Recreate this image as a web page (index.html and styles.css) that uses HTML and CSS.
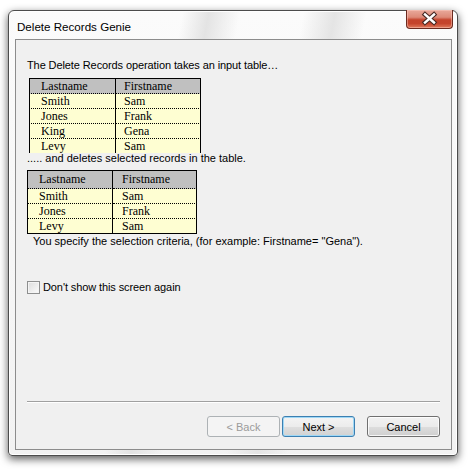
FILE: index.html
```html
<!DOCTYPE html>
<html>
<head>
<meta charset="utf-8">
<link rel="stylesheet" href="styles.css">
</head>
<body>
<div class="window">
  <div class="titlebar">
    <span class="title">Delete Records Genie</span>
    <div class="close">
      <svg width="47" height="19" viewBox="0 0 47 19">
        <path d="M19 5.5 L28 13.5 M28 5.5 L19 13.5" stroke="#4a2a24" stroke-width="4.6" stroke-linecap="square" fill="none"/>
        <path d="M19 5.5 L28 13.5 M28 5.5 L19 13.5" stroke="#ffffff" stroke-width="2.4" stroke-linecap="square" fill="none"/>
      </svg>
    </div>
  </div>
  <div class="client">
    <p class="line first">The Delete Records operation takes an input table…</p>
    <div class="clip">
      <table class="grid grid-a">
        <tr class="head"><td>Lastname</td><td>Firstname</td></tr>
        <tr><td>Smith</td><td>Sam</td></tr>
        <tr><td>Jones</td><td>Frank</td></tr>
        <tr><td>King</td><td>Gena</td></tr>
        <tr><td>Levy</td><td>Sam</td></tr>
      </table>
    </div>
    <p class="line second">..... and deletes selected records in the table.</p>
    <table class="grid grid-b">
      <tr class="head"><td>Lastname</td><td>Firstname</td></tr>
      <tr><td>Smith</td><td>Sam</td></tr>
      <tr><td>Jones</td><td>Frank</td></tr>
      <tr class="last"><td>Levy</td><td>Sam</td></tr>
    </table>
    <p class="line third">You specify the selection criteria, (for example: Firstname= "Gena").</p>
    <label class="check"><span class="box"></span><span>Don't show this screen again</span></label>
    <div class="sep"></div>
    <div class="buttons">
      <button class="btn disabled">&lt; Back</button>
      <button class="btn default">Next &gt;</button>
      <button class="btn cancel">Cancel</button>
    </div>
  </div>
</div>
</body>
</html>
```

FILE: styles.css
```css
html, body {
  margin: 0;
  padding: 0;
  background: #ffffff;
}
body {
  width: 472px;
  height: 469px;
  overflow: hidden;
  font-family: "Liberation Sans", Arial, sans-serif;
  font-size: 11px;
  color: #000;
}
.window {
  box-sizing: border-box;
  margin: 10px 0 0 8px;
  width: 450px;
  height: 446px;
  border: 1px solid #4c4c4c;
  border-radius: 6px 6px 4px 4px;
  background:
    linear-gradient(100deg, rgba(255,255,255,0) 0%, rgba(255,255,255,0) 33%, rgba(225,225,225,0.9) 38%, rgba(255,255,255,0) 44%, rgba(255,255,255,0) 56%, rgba(226,226,226,0.9) 62%, rgba(255,255,255,0) 68%),
    linear-gradient(#fbfbfb, #f2f2f2);
  box-shadow: 0 3px 9px rgba(0,0,0,0.65), inset 0 0 0 1px #ffffff;
  display: flex;
  flex-direction: column;
}
.titlebar {
  height: 28px;
  display: flex;
  align-items: flex-start;
  justify-content: space-between;
  flex: none;
}
.title {
  font-family: "Liberation Sans", Arial, sans-serif;
  font-size: 11.6px;
  margin: 9px 0 0 8px;
  line-height: 14px;
}
.close {
  margin: -1px 4px 0 0;
  width: 47px;
  height: 19px;
  box-sizing: border-box;
  border: 1px solid #6b2a1f;
  border-top: none;
  border-radius: 0 0 4px 4px;
  background: linear-gradient(#e9a99b 0%, #dd8a78 40%, #c4432c 55%, #c5442c 75%, #e07a5c 100%);
  box-shadow: inset 0 0 0 1px rgba(255,210,200,0.45);
  overflow: hidden;
}
.close svg { display: block; margin: -1px 0 0 -1px; }
.client {
  flex: 1;
  margin: 0 5px 5px 6px;
  border: 1px solid #8c8c8c;
  background: #f0f0f0;
  padding: 0 11px 12px 11px;
  display: flex;
  flex-direction: column;
  align-items: flex-start;
}
.line {
  margin: 0;
  line-height: 14px;
  white-space: nowrap;
}
.first { margin-top: 18px; letter-spacing: -0.1px; }
.clip {
  margin-top: 6px;
  margin-left: 2px;
  height: 75px;
  overflow: hidden;
}
.second { margin-top: -2px; }
.third { margin-left: 6px; }
.grid {
  border-collapse: separate;
  border-spacing: 0;
  font-family: "Liberation Serif", "Times New Roman", serif;
  font-size: 12px;
}
.grid td {
  padding: 0 0 0 11px;
  height: 14px;
  line-height: 14px;
  border-bottom: 1px dotted #000;
  background: #fefed2;
  white-space: nowrap;
  vertical-align: top;
}
.grid td:first-child {
  border-left: 1px solid #000;
  border-right: 1px solid #000;
}
.grid td:last-child {
  border-right: 1px solid #000;
  padding-left: 8px;
}
.grid .head td {
  background: #c0c0c0;
  border-top: 1px solid #000;
}
.grid-a td:first-child { width: 74px; }
.grid-a td:last-child { width: 76px; }
.grid-b { margin-top: 5px; }
.grid-b td:first-child { width: 73px; }
.grid-b td:last-child { width: 74px; padding-left: 9px; }
.grid-b .head td { height: 16px; line-height: 17px; }
.grid-b .last td { border-bottom: 1px solid #000; }
.check {
  margin-top: 33px;
  display: flex;
  align-items: center;
  height: 13px;
  line-height: 13px;
  white-space: nowrap;
  letter-spacing: -0.1px;
}
.box {
  box-sizing: border-box;
  width: 13px;
  height: 13px;
  border: 1px solid #8e8f8f;
  background: linear-gradient(135deg, #dcdcdc, #fbfbfb);
  box-shadow: inset 0 0 0 1px #f4f4f4;
  margin-right: 3px;
  flex: none;
}
.sep {
  margin-top: auto;
  align-self: stretch;
  height: 1px;
  background: #a0a0a0;
  border-bottom: 1px solid #ffffff;
}
.buttons {
  margin-top: 13px;
  align-self: stretch;
  display: flex;
  justify-content: flex-end;
}
.btn {
  box-sizing: border-box;
  width: 73px;
  height: 21px;
  padding: 0;
  font-family: "Liberation Sans", Arial, sans-serif;
  font-size: 11px;
  color: #000;
  border-radius: 3px;
  border: 1px solid #707070;
  background: linear-gradient(#f2f2f2 0%, #ebebeb 50%, #dddddd 51%, #cfcfcf 100%);
  box-shadow: inset 0 0 0 1px rgba(255,255,255,0.8);
}
.btn.disabled {
  color: #9b9b9b;
  border-color: #adb2b5;
  background: #f4f4f4;
  box-shadow: none;
}
.btn.default {
  margin-left: 2px;
  border-color: #3c7fb1;
  box-shadow: inset 0 0 0 1px #9fd8f6;
  background: linear-gradient(#f4f4f4 0%, #ececec 50%, #dfdfdf 51%, #d2d2d2 100%);
}
.btn.cancel { margin-left: 12px; }
```
